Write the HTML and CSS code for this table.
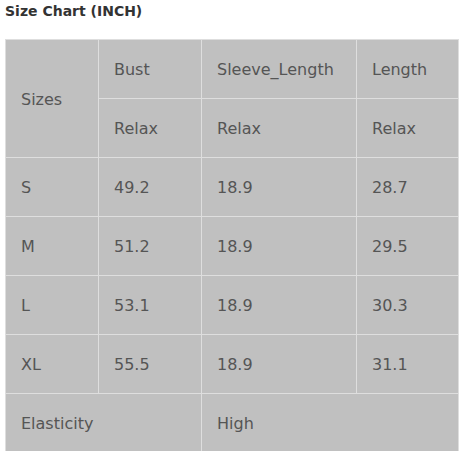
FILE: index.html
```html
<!DOCTYPE html>
<html>
<head>
<meta charset="utf-8">
<link rel="stylesheet" href="styles.css">
</head>
<body>
<h3 class="title">Size Chart (INCH)</h3>
<table class="chart">
  <colgroup>
    <col class="c1"><col class="c2"><col class="c3"><col class="c4">
  </colgroup>
  <tr><td rowspan="2">Sizes</td><td>Bust</td><td>Sleeve_Length</td><td>Length</td></tr>
  <tr><td>Relax</td><td>Relax</td><td>Relax</td></tr>
  <tr><td>S</td><td>49.2</td><td>18.9</td><td>28.7</td></tr>
  <tr><td>M</td><td>51.2</td><td>18.9</td><td>29.5</td></tr>
  <tr><td>L</td><td>53.1</td><td>18.9</td><td>30.3</td></tr>
  <tr><td>XL</td><td>55.5</td><td>18.9</td><td>31.1</td></tr>
  <tr><td colspan="2">Elasticity</td><td colspan="2">High</td></tr>
</table>
</body>
</html>
```

FILE: styles.css
```css
html, body {
  margin: 0;
  padding: 0;
  background: #fff;
}
body {
  padding: 0 5px;
  font-family: "DejaVu Sans", sans-serif;
  color: #444;
}
.title {
  margin: 0;
  padding-top: 1px;
  height: 38px;
  font-size: 14px;
  font-weight: 700;
  color: #333;
  line-height: 20px;
}
.chart {
  border-collapse: collapse;
  table-layout: fixed;
  width: 454px;
  background: #c0c0c0;
  font-size: 16px;
}
.c1 { width: 93px; }
.c2 { width: 103px; }
.c3 { width: 155px; }
.c4 { width: 102px; }
.chart td {
  border: 1px solid #dedede;
  height: 58px;
  padding: 1px 0 0 15px;
  box-sizing: border-box;
  vertical-align: middle;
  color: #555;
  white-space: nowrap;
}
.chart tr { height: 59px; }
```
